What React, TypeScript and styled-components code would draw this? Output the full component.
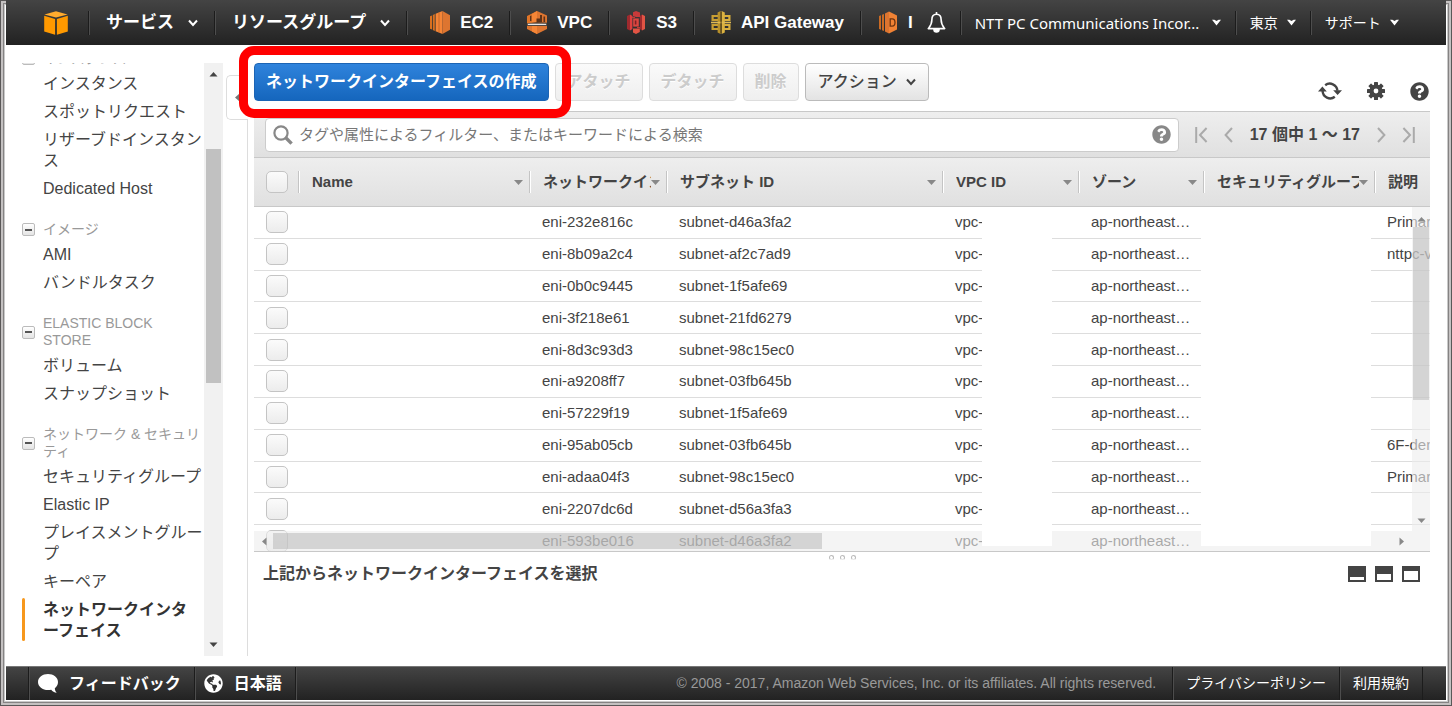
import React from "react";
import styled, { createGlobalStyle, css } from "styled-components";
import { FaGlobeAmericas, FaQuestionCircle } from "react-icons/fa";

const sans = `"Liberation Sans", "Noto Sans CJK JP", sans-serif`;
const humanist = `"Noto Sans", "Noto Sans CJK JP", sans-serif`;

const GlobalStyle = createGlobalStyle`
  * { box-sizing: border-box; }
  body { margin: 0; background: #fff; color: #444; font-family: ${sans}; }
  button, input { font-family: inherit; }
  svg { display: block; flex: none; }
  a { color: inherit; text-decoration: none; }
`;

const Frame = styled.div`
  height: 100vh;
  min-height: 640px;
  display: flex;
  flex-direction: column;
  padding: 0 6px 6px;
  background: #fff;
  box-shadow: inset 0 0 0 1px #5a5858, inset 0 0 0 3px #c4c1c1,
    inset 0 0 0 4px #858383, inset 0 0 0 5px #c9c9c9;
`;

/* ---------- top navigation ---------- */

const TopBar = styled.header`
  height: 45px;
  flex: none;
  display: flex;
  align-items: center;
  justify-content: space-between;
  background: linear-gradient(#444, #222);
  color: #fff;
  white-space: nowrap;
`;

const NavGroup = styled.nav`
  flex: none;
  display: flex;
  align-items: center;
`;

const divider = css`
  border-left: 1px solid #1c1c1c;
  box-shadow: inset 1px 0 0 #4d4d4d;
`;

const Logo = styled.a`
  padding: 0 20px 0 38px;
`;

const NavMenu = styled.button`
  height: 24px;
  display: flex;
  align-items: center;
  gap: 14px;
  padding: 0 16px 0 17px;
  border: 0;
  background: none;
  color: #fff;
  font-size: 17px;
  font-weight: 700;
  line-height: 24px;
  ${divider}
`;

const Shortcut = styled.a<{ $first?: boolean }>`
  height: 24px;
  display: flex;
  align-items: center;
  gap: 10px;
  padding: 0 16px 0 ${(p) => (p.$first ? 23 : 17)}px;
  font-size: 17px;
  font-weight: 700;
  line-height: 24px;
  ${divider}
  &:last-child {
    padding-right: 0;
  }
`;

const AccountMenu = styled.button`
  height: 24px;
  display: flex;
  align-items: center;
  gap: 9px;
  padding: 0 14px;
  border: 0;
  background: none;
  color: #fff;
  font-family: ${humanist};
  font-size: 14px;
  line-height: 24px;
  ${divider}
`;

const AccountName = styled.span`
  width: 228px;
  font-size: 15px;
  text-align: left;
`;

const BellButton = styled.button`
  padding: 0 14px;
  border: 0;
  background: none;
  color: #fff;
`;

const SupportMenu = styled(AccountMenu)`
  padding-right: 48px;
`;

/* ---------- body ---------- */

const Body = styled.div`
  flex: 1;
  min-height: 0;
  display: flex;
  padding: 18px 16px 10px;
`;

const Sidebar = styled.nav`
  width: 182px;
  flex: none;
  display: flex;
  flex-direction: column;
  justify-content: flex-end;
  padding-bottom: 12px;
  overflow: hidden;
  white-space: normal;
  word-break: break-all;
`;

const SideHeading = styled.h2`
  margin: 0;
  padding: 19px 0 2px;
  display: flex;
  align-items: center;
  gap: 8px;
  color: #999;
  font-size: 14px;
  font-weight: 400;
  line-height: 17px;
  word-break: normal;
`;

const Toggle = styled.button`
  width: 13px;
  height: 13px;
  flex: none;
  display: flex;
  align-items: center;
  justify-content: center;
  padding: 0;
  border: 1px solid #bbb;
  border-radius: 2px;
  background: linear-gradient(#fff, #e4e4e4);
  &::before {
    content: "";
    width: 7px;
    height: 2px;
    background: #555;
  }
`;

const HeadingText = styled.span<{ $wide?: boolean }>`
  flex: 1;
  max-width: ${(p) => (p.$wide ? 160 : 130)}px;
  word-break: ${(p) => (p.$wide ? "break-all" : "normal")};
`;

const SideLink = styled.a<{ $active?: boolean }>`
  display: block;
  position: relative;
  padding: 4px 0 3px 21px;
  font-size: 16px;
  line-height: 21px;
  line-break: anywhere;
  ${(p) =>
    p.$active &&
    css`
      padding-right: 12px;
      color: #333;
      font-weight: 700;
      &::before {
        content: "";
        position: absolute;
        left: 0;
        top: 3px;
        bottom: 3px;
        width: 3px;
        border-radius: 2px;
        background: #f7981d;
      }
    `}
`;

const SideScroll = styled.div`
  width: 19px;
  flex: none;
  display: flex;
  flex-direction: column;
  align-items: center;
  padding: 7px 0;
  background: #f1f1f1;
`;

const SideTrack = styled.div`
  flex: 1;
  width: 15px;
  display: flex;
  flex-direction: column;
`;

const SideThumb = styled.div`
  flex: 234;
  background: #c1c1c1;
`;

const Spacer = styled.div<{ $grow: number }>`
  flex: ${(p) => p.$grow};
`;

const Splitter = styled.div`
  width: 25px;
  flex: none;
  display: flex;
  flex-direction: column;
  padding: 12px 0 0 3px;
`;

const CollapseTab = styled.button`
  height: 45px;
  flex: none;
  padding: 0 0 0 6px;
  border: 1px solid #ddd;
  border-right: 0;
  border-radius: 5px 0 0 5px;
  background: #fff;
  color: #777;
`;

const SplitLine = styled.div`
  flex: 1;
  border-right: 1px solid #ddd;
`;

const Main = styled.main`
  flex: 1;
  min-width: 0;
  display: flex;
  flex-direction: column;
  padding-left: 6px;
`;

/* ---------- action bar ---------- */

const ActionBar = styled.div`
  height: 48px;
  flex: none;
  display: flex;
  align-items: flex-start;
  gap: 6px;
  white-space: nowrap;
`;

const Button = styled.button<{ $primary?: boolean }>`
  height: 38px;
  display: flex;
  align-items: center;
  gap: 9px;
  padding: 0 12px;
  border: 1px solid #bbb;
  border-radius: 4px;
  background: linear-gradient(#fff, #e3e3e3);
  color: #444;
  font-size: 16px;
  font-weight: 500;
  line-height: 20px;
  &:disabled {
    padding: 0 11px;
    border-color: #ddd;
    background: linear-gradient(#fafafa, #efefef);
    color: #ccc;
    font-weight: 700;
    text-shadow: 0 1px 0 #fff;
  }
  ${(p) =>
    p.$primary &&
    css`
      padding: 0 11px;
      border-color: #1c64b4;
      background: linear-gradient(#2f83dc, #1566bd);
      color: #fff;
      font-weight: 700;
    `}
`;

const Highlighted = styled.div`
  position: relative;
  &::after {
    content: "";
    position: absolute;
    inset: -17px -22px -17px -15px;
    border: 9px solid #f00;
    border-radius: 15px;
    pointer-events: none;
    z-index: 5;
  }
`;

const ToolIcons = styled.div`
  margin-left: auto;
  padding: 18px 1px 0 0;
  display: flex;
  align-items: center;
  gap: 25px;
`;

const IconButton = styled.button`
  padding: 0;
  border: 0;
  background: none;
  color: #444;
`;

/* ---------- filter bar ---------- */

const FilterBar = styled.div`
  height: 47px;
  flex: none;
  display: flex;
  align-items: center;
  padding: 0 15px 0 11px;
  border-top: 1px solid #c8c8c8;
  border-bottom: 1px solid #c8c8c8;
  background: linear-gradient(#eee, #e0e0e0);
`;

const SearchBox = styled.label`
  flex: 1;
  height: 34px;
  display: flex;
  align-items: center;
  gap: 6px;
  padding: 0 7px;
  border: 1px solid #ccc;
  border-radius: 4px;
  background: #fff;
  color: #888;
`;

const SearchInput = styled.input`
  flex: 1;
  min-width: 0;
  padding: 0;
  border: 0;
  outline: 0;
  background: none;
  font-size: 15px;
  line-height: 22px;
  &::placeholder {
    color: #777;
    opacity: 1;
  }
`;

const Pager = styled.div`
  display: flex;
  align-items: center;
  gap: 16px;
  padding-left: 16px;
  white-space: nowrap;
`;

const PageButton = styled(IconButton)`
  color: #aaa;
`;

const PageText = styled.span`
  padding: 0 1px;
  font-size: 16px;
  font-weight: 700;
  line-height: 24px;
`;

/* ---------- table ---------- */

const TableArea = styled.section`
  position: relative;
  height: 394px;
  flex: none;
  overflow: hidden;
  border-bottom: 1px solid #c8c8c8;
`;

const Table = styled.table`
  width: 100%;
  height: 399px;
  table-layout: fixed;
  border-collapse: separate;
  border-spacing: 0;
  font-size: 15px;
  white-space: nowrap;
`;

const HeadRow = styled.tr`
  height: 49px;
`;

const Th = styled.th`
  height: 49px;
  padding: 0;
  border-bottom: 1px solid #c8c8c8;
  background: linear-gradient(#eee, #e0e0e0);
  text-align: left;
  font-weight: 700;
`;

const HeadCell = styled.div<{ $last?: boolean }>`
  height: 22px;
  display: flex;
  align-items: center;
  padding: 0 7px 0 12px;
  line-height: 22px;
  ${(p) =>
    !p.$last &&
    css`
      border-right: 1px solid #fff;
      box-shadow: inset -1px 0 0 #c4c4c4;
    `}
`;

const HeadLabel = styled.span`
  flex: 1;
  overflow: hidden;
`;

const Td = styled.td`
  padding: 0 0 0 11px;
  border-bottom: 1px solid #ddd;
  overflow: hidden;
  line-height: 22px;
`;

const CheckTd = styled(Td)`
  padding-left: 12px;
`;

const Check = styled.input`
  appearance: none;
  display: block;
  width: 22px;
  height: 22px;
  margin: 0;
  border: 1px solid #c4c4c4;
  border-radius: 5px;
  background: linear-gradient(#fbfbfb, #ececec);
`;

const Mask = styled.div<{ $left: number; $width: number }>`
  position: absolute;
  top: 49px;
  bottom: 5px;
  left: ${(p) => p.$left}px;
  width: ${(p) => p.$width}px;
  background: #fff;
  z-index: 2;
`;

const HScroll = styled.div`
  position: absolute;
  left: 0;
  right: 0;
  bottom: 0;
  height: 20px;
  display: flex;
  align-items: center;
  padding: 0 24px 0 6px;
  background: rgba(236, 236, 236, 0.6);
  color: #888;
`;

const HTrack = styled.div`
  flex: 1;
  height: 16px;
  margin: 0 4px;
`;

const HThumb = styled.div`
  width: 49%;
  height: 16px;
  background: rgba(165, 165, 165, 0.4);
`;

const VScroll = styled.div`
  position: absolute;
  top: 49px;
  right: 0;
  bottom: 20px;
  width: 18px;
  display: flex;
  flex-direction: column;
  align-items: center;
  padding: 8px 0 6px;
  background: rgba(236, 236, 236, 0.6);
  color: #888;
`;

const VTrack = styled.div`
  flex: 1;
  width: 16px;
  padding-top: 3px;
`;

const VThumb = styled.div`
  height: 60%;
  background: rgba(165, 165, 165, 0.4);
`;

/* ---------- details ---------- */

const Details = styled.section`
  flex: 1;
  display: flex;
  flex-direction: column;
`;

const Grip = styled.div`
  height: 11px;
  display: flex;
  align-items: center;
  justify-content: center;
  gap: 6px;
  span {
    width: 5px;
    height: 5px;
    border: 1px solid #bbb;
    border-bottom-color: #e8e8e8;
    border-radius: 3px;
  }
`;

const DetailRow = styled.div`
  display: flex;
  align-items: center;
  justify-content: space-between;
  padding: 0 10px 0 9px;
`;

const DetailTitle = styled.h3`
  margin: 0;
  font-size: 16px;
  font-weight: 700;
  line-height: 22px;
`;

const PaneButtons = styled.div`
  display: flex;
  gap: 9px;
`;

/* ---------- footer ---------- */

const Footer = styled.footer`
  height: 34px;
  flex: none;
  display: flex;
  align-items: stretch;
  padding: 0 23px 0 22px;
  border-top: 1px solid #777;
  background: linear-gradient(#444, #222);
  color: #fff;
  font-size: 14px;
  line-height: 32px;
  white-space: nowrap;
`;

const FooterButton = styled.button`
  display: flex;
  align-items: center;
  gap: 11px;
  padding: 0 13px 0 9px;
  border: 0;
  background: none;
  color: #fff;
  font-size: 16px;
  font-weight: 700;
  line-height: 24px;
  ${divider}
`;

const Copyright = styled.div`
  flex: 1;
  padding-right: 16px;
  color: #999;
  text-align: right;
  ${divider}
`;

const FooterLink = styled.a`
  padding: 0 13px;
  ${divider}
`;

const FooterEnd = styled.span`
  width: 1px;
  ${divider}
`;

/* ---------- drawings ---------- */

const Chevron = () => (
  <svg width="10" height="8" viewBox="0 0 10 8" fill="none" stroke="currentColor" strokeWidth="2">
    <path d="M1 1.5 5 6 9 1.5" />
  </svg>
);

const Caret = () => (
  <svg width="9" height="7" viewBox="0 0 9 7" fill="currentColor">
    <path d="M0 .8h2.4L4.5 2l2.1-1.2H9L4.5 6.4Z" />
  </svg>
);

const SortArrow = () => (
  <svg width="9" height="5" viewBox="0 0 9 5" fill="#888">
    <path d="M0 0h9L4.5 5Z" />
  </svg>
);

const angle = { up: 0, right: 90, down: 180, left: 270 };

const ScrollArrow = ({ dir }: { dir: keyof typeof angle }) => (
  <svg width="9" height="9" viewBox="0 0 9 9" fill="currentColor">
    <path transform={`rotate(${angle[dir]} 4.5 4.5)`} d="M.5 6.5h8l-4-4.5Z" />
  </svg>
);

const CubeLogo = () => (
  <svg width="24" height="24" viewBox="0 0 24 24" fill="#f90">
    <path d="M.4 3.4 12 .2l11.6 3.2L12 6.6Z" fill="#ffab2e" />
    <path d="M.2 4.8 11.1 8v15.8L.2 20.6Z" />
    <path d="M23.8 4.8 12.9 8v15.8l10.9-3.2Z" />
  </svg>
);

const Ec2Icon = () => (
  <svg width="20" height="23" viewBox="0 0 20 23">
    <path d="M0 5.2 2 4.4v14.2l-2-.8ZM2.8 4l2-.9v16.8l-2-.9Z" fill="#d9701f" />
    <path d="M5.6 2.8 12.5 0v23l-6.9-2.8Z" fill="#f58536" />
    <path d="M12.5 0 20 4.2v14.6L12.5 23Z" fill="#dd7530" />
    <path d="M9 1.5v20" stroke="#b85e22" strokeWidth=".7" />
  </svg>
);

const VpcIcon = () => (
  <svg width="20" height="23" viewBox="0 0 20 23">
    <path d="M0 5 10 0v11.2L0 12.4Z" fill="#e07528" />
    <path d="m5 3 5-3v11H5Z" fill="#f58536" />
    <path d="m10 0 10 4.6v7.2l-10-.6Z" fill="#dd7530" />
    <path d="M9.5 7.5H13V4h2v7.2H9.5ZM16.5 5.500h1.600V11h-1.600ZM3 5v5h1.400V4.400Z" fill="#5e3319" />
    <path d="M0 15h20v3L10 23 0 18Z" fill="#dd7530" />
    <path d="M5 15h5v8l-5-2.4Z" fill="#f58536" />
    <path d="M0 12.4c5-.5 13-.5 20 0v2H0Z" fill="#6f5d52" />
    <path d="M1 13.4h18" stroke="#eee" strokeWidth="1.1" />
  </svg>
);

const S3Icon = () => (
  <svg width="20" height="23" viewBox="0 0 20 23">
    <path d="m1 5 3-1.4v16L1 18Z" fill="#9f2a2e" />
    <path d="M4 3.6 6.4 5v13L4 19.6Z" fill="#dc3f3f" />
    <path d="m19 5-3-1.4v16L19 18Z" fill="#e25444" />
    <path d="M16 3.6 13.8 5v13l2.2 1.6Z" fill="#9f2a2e" />
    <path d="m7 1.2 3-1.2 4 1.6V6h-4l-3-1Z" fill="#c73a3a" />
    <path d="M7 17.6h6.8V21L10 23l-3-1.4Z" fill="#e25444" />
    <path d="M7.2 7.4h5.6v8.2H7.2Z" fill="#dc4640" />
    <path d="M9.6 9.5v4" stroke="#7d1f24" strokeWidth="1.6" />
    <path d="M6 6.4h3M11 16.6h3" stroke="#c43a38" strokeWidth="1.2" />
  </svg>
);

const ApiIcon = () => (
  <svg width="20" height="23" viewBox="0 0 20 23">
    <path d="m6.6 1.4 3-1.4v23l-3-1.4Z" fill="#b8902a" />
    <path d="m10.6 0 3.2 1.4v20.2L10.6 23Z" fill="#dbb241" />
    <path d="M7 5H1.600v4H7M7 14H1.600v4H7" fill="none" stroke="#c99f33" strokeWidth="2.2" />
    <path d="M13 5h5.400v4H13M13 14h5.400v4H13" fill="none" stroke="#d9af3d" strokeWidth="2.2" />
    <path d="M0 11.5h20" stroke="#e0bb55" strokeWidth="1.6" />
    <path d="M10.1 1v21" stroke="#5d4512" strokeWidth="1" />
  </svg>
);

const DatabaseIcon = () => (
  <svg width="20" height="23" viewBox="0 0 20 23">
    <path d="m1 5 2-.8v14.6L1 18ZM4 3.8l2-.9v17.2l-2-.9Z" fill="#c96a24" />
    <path d="m7 2.4 4-2v22.2l-4-2Z" fill="#dd7530" />
    <path d="m11 .4 8 4v14.2l-8 4Z" fill="#f08234" />
    <path d="M12.2 7.8h2c2 0 2.8 1.6 2.8 3.7s-.8 3.7-2.8 3.7h-2Z" fill="none" stroke="#6d3310" strokeWidth="1.3" />
  </svg>
);

const BellIcon = () => (
  <svg width="19" height="21" viewBox="0 0 19 21" fill="none" stroke="currentColor" strokeWidth="1.6">
    <path d="M9.5 2.2c-3.4 0-4.6 2.5-4.6 5.4 0 5-1.6 6.6-3.6 9h16.4c-2-2.4-3.6-4-3.6-9 0-2.9-1.2-5.4-4.6-5.4Z" strokeLinejoin="round" />
    <path d="M9.5 0v2.4" />
    <path d="M7 17.4a2.5 2.5 0 0 0 5 0Z" fill="currentColor" />
  </svg>
);

const RefreshIcon = () => (
  <svg width="24" height="20" viewBox="0 0 24 20">
    <g fill="none" stroke="currentColor" strokeWidth="2.4">
      <path d="M7.2 4.2a7.6 7.6 0 0 1 12.2 5.4" />
      <path d="M16.8 15.8A7.6 7.6 0 0 1 4.6 10" />
    </g>
    <path d="M15.2 9.2H24L19.6 14ZM0 10.4h8.8L4.4 5.6Z" fill="currentColor" />
  </svg>
);

const GearIcon = () => (
  <svg width="18" height="18" viewBox="0 0 18 18">
    <g fill="currentColor">
      {[0, 45, 90, 135].map((a) => (
        <rect key={a} x="7" y="0" width="4" height="18" rx=".6" transform={`rotate(${a} 9 9)`} />
      ))}
      <circle cx="9" cy="9" r="6.6" />
    </g>
    <circle cx="9" cy="9" r="2.4" fill="#fff" />
  </svg>
);

const SearchIcon = () => (
  <svg width="20" height="20" viewBox="0 0 20 20" fill="none" stroke="#888">
    <circle cx="8" cy="8" r="6.6" strokeWidth="2.2" />
    <path d="m12.8 12.8 5.8 5.8" strokeWidth="3.4" />
  </svg>
);

const ArrowFirst = () => (
  <svg width="13" height="16" viewBox="0 0 13 16" fill="none" stroke="currentColor" strokeWidth="2">
    <path d="M1.2 0v16M11.6 1 5 8l6.6 7" />
  </svg>
);

const ArrowPrev = () => (
  <svg width="9" height="16" viewBox="0 0 9 16" fill="none" stroke="currentColor" strokeWidth="2">
    <path d="M8 1 1.6 8 8 15" />
  </svg>
);

const ArrowNext = () => (
  <svg width="9" height="16" viewBox="0 0 9 16" fill="none" stroke="currentColor" strokeWidth="2">
    <path d="m1 1 6.4 7L1 15" />
  </svg>
);

const ArrowLast = () => (
  <svg width="13" height="16" viewBox="0 0 13 16" fill="none" stroke="currentColor" strokeWidth="2">
    <path d="M11.8 0v16M1.4 1 8 8l-6.6 7" />
  </svg>
);

const PaneIcon = ({ open }: { open: number }) => (
  <svg width="18" height="16" viewBox="0 0 18 16">
    <path d="M0 0h18v16H0Z" fill="#444" />
    <rect x="2" y={14 - open} width="14" height={open} fill="#fff" />
  </svg>
);

const ChatIcon = () => (
  <svg width="20" height="19" viewBox="0 0 20 19" fill="currentColor">
    <path d="M10 0c5.5 0 10 3.5 10 8 0 2.7-1.3 4.8-3.2 6.2.1 1.7.7 3.2 1.9 4.5-2.3-.1-4.2-1.2-5.5-2.9-1 .2-2 .3-3.2.3-5.5 0-10-3.600-10-8.100S4.500 0 10 0Z" />
  </svg>
);

/* ---------- data ---------- */

const columns = [
  { label: "Name", width: 231 },
  { label: "ネットワークイン", width: 137 },
  { label: "サブネット ID", width: 276 },
  { label: "VPC ID", width: 136 },
  { label: "ゾーン", width: 125 },
  { label: "セキュリティグループ", width: 171 },
];

const rows = [
  ["eni-232e816c", "subnet-d46a3fa2", "Primary"],
  ["eni-8b09a2c4", "subnet-af2c7ad9", "nttpc-v"],
  ["eni-0b0c9445", "subnet-1f5afe69", ""],
  ["eni-3f218e61", "subnet-21fd6279", ""],
  ["eni-8d3c93d3", "subnet-98c15ec0", ""],
  ["eni-a9208ff7", "subnet-03fb645b", ""],
  ["eni-57229f19", "subnet-1f5afe69", ""],
  ["eni-95ab05cb", "subnet-03fb645b", "6F-den"],
  ["eni-adaa04f3", "subnet-98c15ec0", "Primary"],
  ["eni-2207dc6d", "subnet-d56a3fa3", ""],
  ["eni-593be016", "subnet-d46a3fa2", ""],
];

const sections = [
  { title: "インスタンス", links: ["インスタンス", "スポットリクエスト", "リザーブドインスタンス", "Dedicated Host"] },
  { title: "イメージ", links: ["AMI", "バンドルタスク"] },
  { title: "ELASTIC BLOCK STORE", links: ["ボリューム", "スナップショット"] },
  {
    title: "ネットワーク & セキュリティ",
    wide: true,
    links: ["セキュリティグループ", "Elastic IP", "プレイスメントグループ", "キーペア", "ネットワークインターフェイス"],
  },
];

const activeLink = "ネットワークインターフェイス";

const shortcuts = [
  { label: "EC2", icon: <Ec2Icon /> },
  { label: "VPC", icon: <VpcIcon /> },
  { label: "S3", icon: <S3Icon /> },
  { label: "API Gateway", icon: <ApiIcon /> },
  { label: "I", icon: <DatabaseIcon /> },
];

export default function App() {
  return (
    <Frame>
      <GlobalStyle />
      <TopBar>
        <NavGroup>
          <Logo href="#" aria-label="AWS">
            <CubeLogo />
          </Logo>
          <NavMenu>
            サービス <Chevron />
          </NavMenu>
          <NavMenu>
            リソースグループ <Chevron />
          </NavMenu>
          {shortcuts.map((s, i) => (
            <Shortcut key={s.label} href="#" $first={i === 0}>
              {s.icon}
              {s.label}
            </Shortcut>
          ))}
        </NavGroup>
        <NavGroup>
          <BellButton aria-label="通知">
            <BellIcon />
          </BellButton>
          <AccountMenu>
            <AccountName>NTT PC Communications Incor...</AccountName>
            <Caret />
          </AccountMenu>
          <AccountMenu>
            東京 <Caret />
          </AccountMenu>
          <SupportMenu>
            サポート <Caret />
          </SupportMenu>
        </NavGroup>
      </TopBar>

      <Body>
        <Sidebar>
          {sections.map((s) => (
            <React.Fragment key={s.title}>
              <SideHeading>
                <Toggle aria-label="折りたたむ" />
                <HeadingText $wide={s.wide}>{s.title}</HeadingText>
              </SideHeading>
              {s.links.map((l) => (
                <SideLink key={l} href="#" $active={l === activeLink}>
                  {l}
                </SideLink>
              ))}
            </React.Fragment>
          ))}
        </Sidebar>
        <SideScroll>
          <ScrollArrow dir="up" />
          <SideTrack>
            <Spacer $grow={70} />
            <SideThumb />
            <Spacer $grow={257} />
          </SideTrack>
          <ScrollArrow dir="down" />
        </SideScroll>
        <Splitter>
          <CollapseTab aria-label="サイドバーを閉じる">
            <ScrollArrow dir="left" />
          </CollapseTab>
          <SplitLine />
        </Splitter>

        <Main>
          <ActionBar>
            <Highlighted>
              <Button $primary>ネットワークインターフェイスの作成</Button>
            </Highlighted>
            <Button disabled>アタッチ</Button>
            <Button disabled>デタッチ</Button>
            <Button disabled>削除</Button>
            <Button>
              アクション <Chevron />
            </Button>
            <ToolIcons>
              <IconButton aria-label="更新">
                <RefreshIcon />
              </IconButton>
              <IconButton aria-label="設定">
                <GearIcon />
              </IconButton>
              <IconButton aria-label="ヘルプ">
                <FaQuestionCircle size={19} />
              </IconButton>
            </ToolIcons>
          </ActionBar>

          <FilterBar>
            <SearchBox>
              <SearchIcon />
              <SearchInput
                aria-label="検索"
                placeholder="タグや属性によるフィルター、またはキーワードによる検索"
              />
              <FaQuestionCircle size={19} />
            </SearchBox>
            <Pager>
              <PageButton aria-label="最初">
                <ArrowFirst />
              </PageButton>
              <PageButton aria-label="前へ">
                <ArrowPrev />
              </PageButton>
              <PageText>17 個中 1 ～ 17</PageText>
              <PageButton aria-label="次へ">
                <ArrowNext />
              </PageButton>
              <PageButton aria-label="最後">
                <ArrowLast />
              </PageButton>
            </Pager>
          </FilterBar>

          <TableArea>
            <Table>
              <colgroup>
                <col width={46} />
                {columns.map((c) => (
                  <col key={c.label} width={c.width} />
                ))}
                <col />
              </colgroup>
              <thead>
                <HeadRow>
                  <Th>
                    <HeadCell>
                      <Check type="checkbox" aria-label="すべて選択" />
                    </HeadCell>
                  </Th>
                  {columns.map((c) => (
                    <Th key={c.label}>
                      <HeadCell>
                        <HeadLabel>{c.label}</HeadLabel>
                        <SortArrow />
                      </HeadCell>
                    </Th>
                  ))}
                  <Th>
                    <HeadCell $last>説明</HeadCell>
                  </Th>
                </HeadRow>
              </thead>
              <tbody>
                {rows.map(([eni, subnet, note]) => (
                  <tr key={eni}>
                    <CheckTd>
                      <Check type="checkbox" aria-label={eni} />
                    </CheckTd>
                    <Td />
                    <Td>{eni}</Td>
                    <Td>{subnet}</Td>
                    <Td>vpc-</Td>
                    <Td>ap-northeast…</Td>
                    <Td />
                    <Td>{note}</Td>
                  </tr>
                ))}
              </tbody>
            </Table>
            <HScroll>
              <ScrollArrow dir="left" />
              <HTrack>
                <HThumb />
              </HTrack>
              <ScrollArrow dir="right" />
            </HScroll>
            <VScroll>
              <ScrollArrow dir="up" />
              <VTrack>
                <VThumb />
              </VTrack>
              <ScrollArrow dir="down" />
            </VScroll>
            <Mask $left={728} $width={70} />
            <Mask $left={947} $width={170} />
          </TableArea>

          <Details>
            <Grip>
              <span />
              <span />
              <span />
            </Grip>
            <DetailRow>
              <DetailTitle>上記からネットワークインターフェイスを選択</DetailTitle>
              <PaneButtons>
                <IconButton aria-label="最小化">
                  <PaneIcon open={3} />
                </IconButton>
                <IconButton aria-label="半分">
                  <PaneIcon open={6} />
                </IconButton>
                <IconButton aria-label="最大化">
                  <PaneIcon open={9} />
                </IconButton>
              </PaneButtons>
            </DetailRow>
          </Details>
        </Main>
      </Body>

      <Footer>
        <FooterButton>
          <ChatIcon /> フィードバック
        </FooterButton>
        <FooterButton>
          <FaGlobeAmericas size={19} /> 日本語
        </FooterButton>
        <Copyright>© 2008 - 2017, Amazon Web Services, Inc. or its affiliates. All rights reserved.</Copyright>
        <FooterLink href="#">プライバシーポリシー</FooterLink>
        <FooterLink href="#">利用規約</FooterLink>
        <FooterEnd />
      </Footer>
    </Frame>
  );
}
